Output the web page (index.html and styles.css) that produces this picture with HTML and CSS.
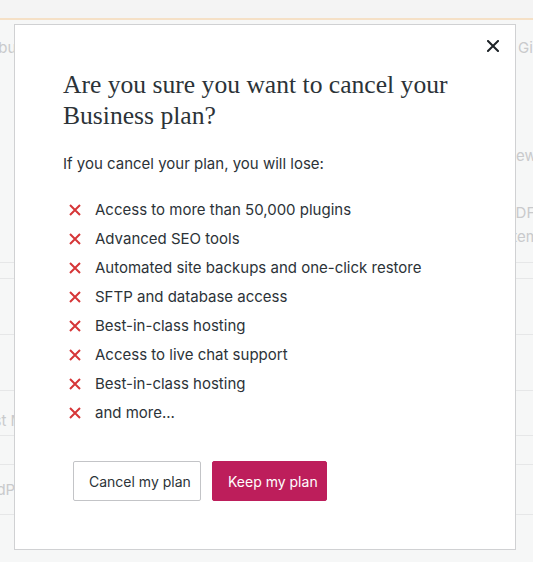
FILE: index.html
```html
<!DOCTYPE html>
<html>
<head>
<meta charset="utf-8">
<link rel="stylesheet" href="styles.css">
</head>
<body>
<div class="page">
  <div class="topbar"></div>
  <div class="bg">
    <div class="bg-row r1"><span class="l">Contribu</span><span class="r">to Gi</span></div>
    <div class="bg-row r2"><span class="r">Renewal</span></div>
    <div class="bg-row r3"><span class="r">PDFs</span></div>
    <div class="bg-row r4"><span class="r">Items</span></div>
    <div class="bg-line l1"></div>
    <div class="bg-line l2"></div>
    <div class="bg-line l3"></div>
    <div class="bg-line l4"></div>
    <div class="bg-row r5"><span class="l">Post Media</span></div>
    <div class="bg-line l5"></div>
    <div class="bg-line l6"></div>
    <div class="bg-row r6"><span class="l">WordPress</span></div>
    <div class="bg-line l7"></div>
  </div>

  <div class="modal">
    <button class="close" aria-label="Close">
      <svg width="12" height="12" viewBox="0 0 12 12"><path d="M1 1 L11 11 M11 1 L1 11" stroke="#1d2327" stroke-width="2" stroke-linecap="square" fill="none"/></svg>
    </button>
    <h1 class="title">Are you sure you want to cancel your Business plan?</h1>
    <p class="lead">If you cancel your plan, you will lose:</p>
    <ul class="losses">
      <li><svg class="x" width="12" height="12" viewBox="0 0 12 12"><path d="M1 1 L11 11 M11 1 L1 11" stroke="#d63638" stroke-width="2" fill="none"/></svg><span>Access to more than 50,000 plugins</span></li>
      <li><svg class="x" width="12" height="12" viewBox="0 0 12 12"><path d="M1 1 L11 11 M11 1 L1 11" stroke="#d63638" stroke-width="2" fill="none"/></svg><span>Advanced SEO tools</span></li>
      <li><svg class="x" width="12" height="12" viewBox="0 0 12 12"><path d="M1 1 L11 11 M11 1 L1 11" stroke="#d63638" stroke-width="2" fill="none"/></svg><span>Automated site backups and one-click restore</span></li>
      <li><svg class="x" width="12" height="12" viewBox="0 0 12 12"><path d="M1 1 L11 11 M11 1 L1 11" stroke="#d63638" stroke-width="2" fill="none"/></svg><span>SFTP and database access</span></li>
      <li><svg class="x" width="12" height="12" viewBox="0 0 12 12"><path d="M1 1 L11 11 M11 1 L1 11" stroke="#d63638" stroke-width="2" fill="none"/></svg><span>Best-in-class hosting</span></li>
      <li><svg class="x" width="12" height="12" viewBox="0 0 12 12"><path d="M1 1 L11 11 M11 1 L1 11" stroke="#d63638" stroke-width="2" fill="none"/></svg><span>Access to live chat support</span></li>
      <li><svg class="x" width="12" height="12" viewBox="0 0 12 12"><path d="M1 1 L11 11 M11 1 L1 11" stroke="#d63638" stroke-width="2" fill="none"/></svg><span>Best-in-class hosting</span></li>
      <li><svg class="x" width="12" height="12" viewBox="0 0 12 12"><path d="M1 1 L11 11 M11 1 L1 11" stroke="#d63638" stroke-width="2" fill="none"/></svg><span>and more...</span></li>
    </ul>
    <div class="actions">
      <button class="btn secondary">Cancel my plan</button>
      <button class="btn primary">Keep my plan</button>
    </div>
  </div>
</div>
</body>
</html>
```

FILE: styles.css
```css
* { box-sizing: border-box; }
html, body { margin: 0; padding: 0; }
body {
  background: #f6f7f7;
  font-family: Inter, "Noto Sans", sans-serif;
  color: #2c3338;
  width: 533px;
  height: 562px;
  overflow: hidden;
}
.page { position: relative; width: 533px; height: 562px; overflow: hidden; }
.topbar {
  height: 20px;
  background: #f4f4f4;
  border-bottom: 2px solid #f5e0c6;
}
.bg { color: #c9cacc; font-size: 15px; }
.bg-row {
  display: flex;
  height: 24px;
  line-height: 24px;
  white-space: nowrap;
}
.bg-row .l { flex: none; }
.bg-row .r { flex: none; }
.bg-line { height: 1px; background: #e6e7e8; }

.r1 { margin-top: 16px; }
.r1 .l { width: 545px; margin-left: -45px; }
.r2 { margin-top: 84px; }
.r2 .r { margin-left: 489px; }
.r3 { margin-top: 33px; }
.r3 .r { margin-left: 506px; }
.r4 .r { margin-left: 508px; }
.l1 { margin-top: 13px; }
.l2 { margin-top: 15px; }
.l3 { margin-top: 55px; }
.l4 { margin-top: 55px; }
.r5 { margin-top: 18px; }
.r5 .l { margin-left: -25px; }
.l5 { margin-top: 2px; }
.l6 { margin-top: 28px; }
.r6 { margin-top: 13px; }
.r6 .l { margin-left: -32px; }
.l7 { margin-top: 12px; }

.modal {
  position: absolute;
  left: 14px;
  top: 24px;
  width: 502px;
  height: 526px;
  background: #fff;
  border: 1px solid #d0d1d3;
  padding: 44px 48px 0 48px;
}
.close {
  position: absolute;
  top: 8px;
  right: 9px;
  width: 26px;
  height: 26px;
  border: 0;
  background: none;
  padding: 0;
  display: flex;
  align-items: center;
  justify-content: center;
}
.title {
  margin: 0;
  font-family: "Liberation Serif", "DejaVu Serif", serif;
  font-weight: 400;
  font-size: 25.6px;
  line-height: 31px;
  color: #2c3338;
}
.lead {
  margin: 22px 0 0 0;
  font-size: 15px;
  line-height: 22px;
}
.losses {
  list-style: none;
  margin: 20px 0 0 0;
  padding: 0;
}
.losses li {
  display: flex;
  align-items: center;
  height: 29px;
  font-size: 15px;
}
.losses .x { margin-left: 6px; margin-right: 14px; flex: none; }
.actions {
  display: flex;
  gap: 11px;
  margin-top: 34px;
  padding-left: 10px;
}
.btn {
  height: 40px;
  padding: 0 15px;
  font-family: Inter, "Noto Sans", sans-serif;
  font-size: 14px;
  border-radius: 2px;
  white-space: nowrap;
  cursor: pointer;
}
.secondary {
  background: #fff;
  border: 1px solid #c3c4c7;
  color: #2c3338;
  width: 128px;
}
.primary {
  background: #bd1e5b;
  border: 1px solid #bd1e5b;
  color: #fff;
  width: 115px;
}
```
